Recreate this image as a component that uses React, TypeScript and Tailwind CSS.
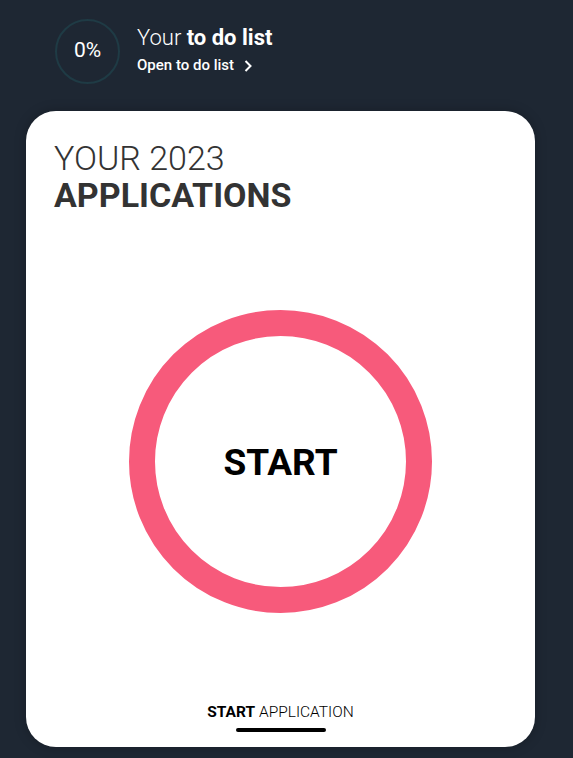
import React from "react";

export default function App() {
  return (
    <div
      className="w-[573px] h-[758px] bg-[#1e2733] overflow-hidden"
      style={{ fontFamily: "Roboto, 'Liberation Sans', sans-serif" }}
    >
      <div className="flex items-center pl-[55px] pt-[18px] h-[84px]">
        <div className="w-[65px] h-[65px] rounded-full border-2 border-[#1f3b45] flex items-center justify-center text-white text-[21px]">
          0%
        </div>
        <div className="ml-[17px] flex flex-col">
          <div className="text-white text-[22px] leading-[26px]">
            <span className="font-light">Your </span>
            <span className="font-bold">to do list</span>
          </div>
          <div className="flex items-center text-white text-[15px] font-medium mt-[3px]">
            Open to do list
            <svg width="10" height="14" viewBox="0 0 10 14" className="ml-[9px]">
              <path d="M2.5 2 L7.5 7 L2.5 12" stroke="white" strokeWidth="2" fill="none" />
            </svg>
          </div>
        </div>
      </div>
      <div className="ml-[26px] mt-[27px] w-[509px] h-[636px] bg-white rounded-[30px] shadow-[0_0_12px_rgba(0,0,0,0.25)] flex flex-col">
        <div className="pl-[28px] pt-[29px] text-[#333333]">
          <div className="text-[34px] font-light leading-[37px]">YOUR 2023</div>
          <div className="text-[34px] font-bold leading-[37px]">APPLICATIONS</div>
        </div>
        <div className="flex justify-center mt-[96px]">
          <div className="w-[303px] h-[303px] rounded-full border-[26px] border-[#f75a7b] flex items-center justify-center">
            <span className="text-[37px] font-bold text-black mt-[2px]">START</span>
          </div>
        </div>
        <div className="flex flex-col items-center mt-[90px]">
          <div className="text-[15.5px] text-black leading-[18px]">
            <span className="font-bold">START</span> <span className="font-light">APPLICATION</span>
          </div>
          <div className="w-[90px] h-[4px] rounded-full bg-black mt-[7px]" />
        </div>
      </div>
    </div>
  );
}
